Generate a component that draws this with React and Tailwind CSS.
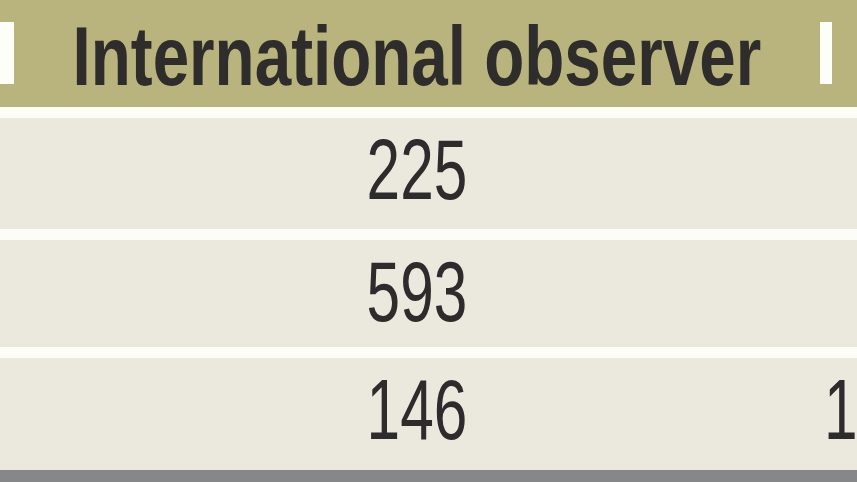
export default function App() {
  const rows = [
    { h: "h-[111px]", a: "225", b: "" },
    { h: "h-[107px]", a: "593", b: "" },
    { h: "h-[112px]", a: "146", b: "1" },
  ];
  const num =
    "inline-block whitespace-nowrap text-[85px] leading-none text-[#2d2b2c] scale-x-[0.71]";
  return (
    <div
      className="w-[857px] h-[482px] overflow-hidden flex flex-col bg-[#fdfdf8]"
      style={{ fontFamily: '"Liberation Sans", Arial, sans-serif' }}
    >
      <div className="flex flex-col gap-[11px]">
        {/* header */}
        <div className="h-[107px] bg-[#b9b37d] flex items-start">
          <div className="w-[14px] shrink-0 h-[62px] mt-[22px] bg-[#fefef9]" />
          <div className="w-[806px] shrink-0 flex justify-center pt-[15px]">
            <span className="inline-block whitespace-nowrap text-[83px] leading-none font-bold text-[#2f2c2c] scale-x-[0.79] origin-center">
              International observer
            </span>
          </div>
          <div className="w-[12px] shrink-0 h-[62px] mt-[22px] bg-[#fefef9]" />
          <div className="flex-1" />
        </div>
        {rows.map((r, i) => (
          <div key={i} className={`${r.h} bg-[#ebe9de] flex items-start`}>
            <div className="w-[14px] shrink-0" />
            <div className="w-[806px] shrink-0 flex justify-center pt-[9px]">
              <span className={`${num} origin-center`}>{r.a}</span>
            </div>
            <div className="flex-1 pl-[4px] pt-[9px] whitespace-nowrap">
              {r.b && <span className={`${num} origin-left`}>{r.b}</span>}
            </div>
          </div>
        ))}
      </div>
      <div className="flex-1 bg-[#858789]" />
    </div>
  );
}
